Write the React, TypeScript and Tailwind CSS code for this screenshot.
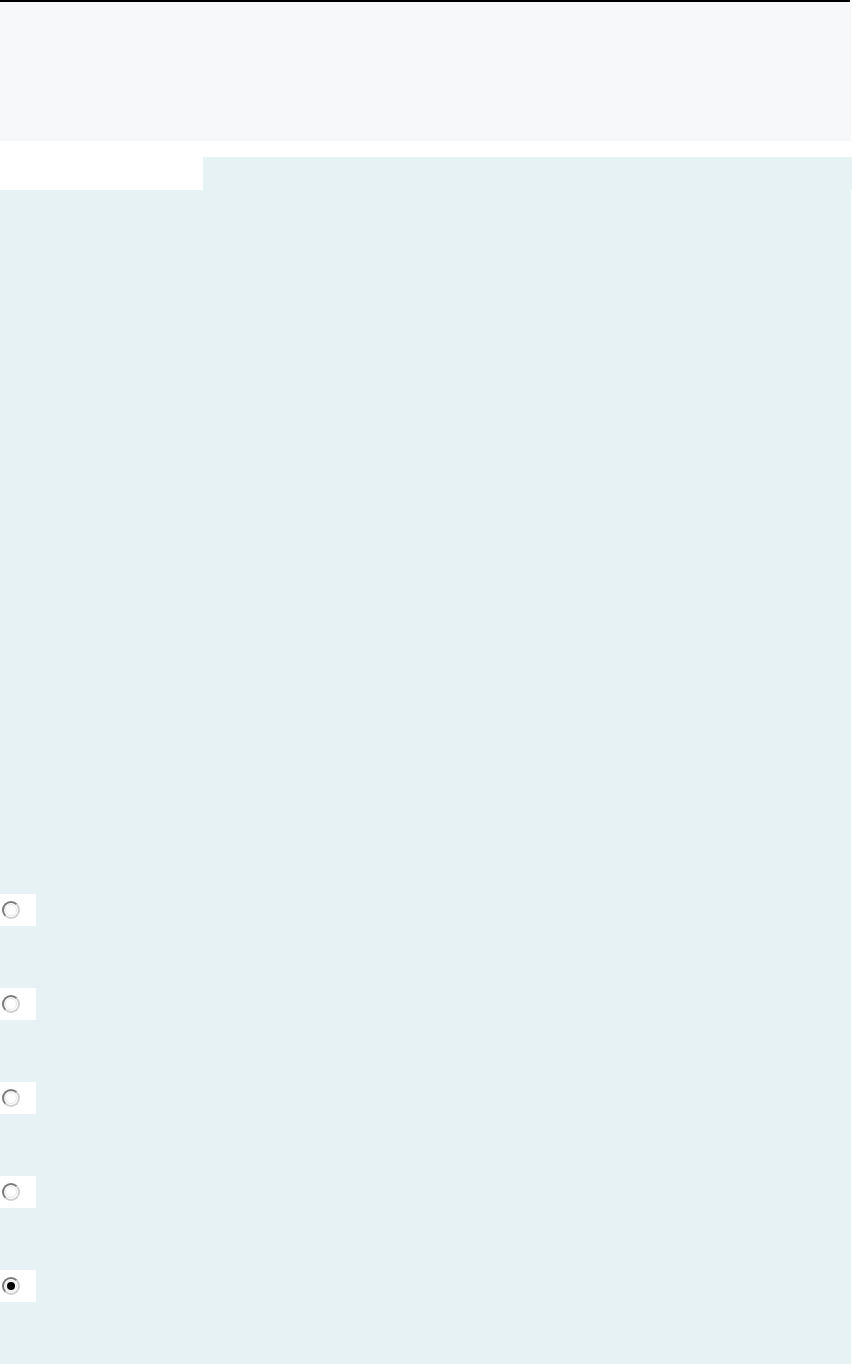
import React from "react";

function Radio({ checked }: { checked?: boolean }) {
  return (
    <div className="w-[36px] h-[32px] bg-white flex items-center pl-[2px]">
      <span className="w-[18px] h-[18px] rounded-full border-2 border-t-[#7a7a7a] border-l-[#7a7a7a] border-r-[#d0d0d0] border-b-[#d0d0d0] bg-white flex items-center justify-center">
        <span className="w-[12px] h-[12px] rounded-full border border-[#e8e8e8] flex items-center justify-center">
          {checked ? <span className="w-[8px] h-[8px] rounded-full bg-black" /> : null}
        </span>
      </span>
    </div>
  );
}

export default function App() {
  const items = [false, false, false, false, true];
  return (
    <div className="w-[852px] min-h-[1364px] bg-white" style={{ fontFamily: '"Liberation Sans", Arial, sans-serif' }}>
      <div className="h-[2px] w-[850px] bg-black" />
      <div className="h-[139px] w-[851px] bg-[#f7f8fa]" />
      <div className="h-[16px]" />
      <div className="flex h-[33px]">
        <div className="w-[203px] bg-white" />
        <div className="flex-1 bg-[#e6f2f3]" />
      </div>
      <div className="w-[851px] h-[1174px] bg-[#e6f2f3] pt-[704px] flex flex-col gap-[62px]">
        {items.map((c, i) => (
          <Radio key={i} checked={c} />
        ))}
      </div>
    </div>
  );
}
